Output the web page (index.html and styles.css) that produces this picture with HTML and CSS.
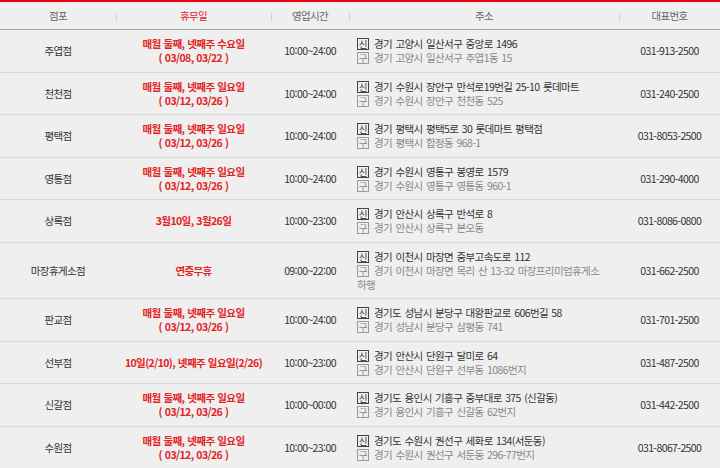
FILE: index.html
```html
<!DOCTYPE html>
<html lang="ko">
<head>
<meta charset="utf-8">
<title>매장 안내</title>
<link rel="stylesheet" href="styles.css">
</head>
<body>
<table class="stores">
  <colgroup>
    <col class="c-name"><col class="c-off"><col class="c-time"><col class="c-addr"><col class="c-tel">
  </colgroup>
  <thead>
    <tr>
      <th>점포</th>
      <th class="sep red">휴무일</th>
      <th class="sep">영업시간</th>
      <th class="sep">주소</th>
      <th class="sep">대표번호</th>
    </tr>
  </thead>
  <tbody>
    <tr>
      <td>주엽점</td>
      <td class="off">매월 둘째, 넷째주 수요일<br>( 03/08, 03/22 )</td>
      <td>10:00~24:00</td>
      <td class="addr"><div class="new"><span class="badge">신</span>경기 고양시 일산서구 중앙로 1496</div><div class="old"><span class="badge">구</span>경기 고양시 일산서구 주엽1동 15</div></td>
      <td>031-913-2500</td>
    </tr>
    <tr>
      <td>천천점</td>
      <td class="off">매월 둘째, 넷째주 일요일<br>( 03/12, 03/26 )</td>
      <td>10:00~24:00</td>
      <td class="addr"><div class="new"><span class="badge">신</span>경기 수원시 장안구 만석로19번길 25-10 롯데마트</div><div class="old"><span class="badge">구</span>경기 수원시 장안구 천천동 525</div></td>
      <td>031-240-2500</td>
    </tr>
    <tr>
      <td>평택점</td>
      <td class="off">매월 둘째, 넷째주 일요일<br>( 03/12, 03/26 )</td>
      <td>10:00~24:00</td>
      <td class="addr"><div class="new"><span class="badge">신</span>경기 평택시 평택5로 30 롯데마트 평택점</div><div class="old"><span class="badge">구</span>경기 평택시 합정동 968-1</div></td>
      <td>031-8053-2500</td>
    </tr>
    <tr>
      <td>영통점</td>
      <td class="off">매월 둘째, 넷째주 일요일<br>( 03/12, 03/26 )</td>
      <td>10:00~24:00</td>
      <td class="addr"><div class="new"><span class="badge">신</span>경기 수원시 영통구 봉영로 1579</div><div class="old"><span class="badge">구</span>경기 수원시 영통구 영통동 960-1</div></td>
      <td>031-290-4000</td>
    </tr>
    <tr>
      <td>상록점</td>
      <td class="off">3월10일, 3월26일</td>
      <td>10:00~23:00</td>
      <td class="addr"><div class="new"><span class="badge">신</span>경기 안산시 상록구 반석로 8</div><div class="old"><span class="badge">구</span>경기 안산시 상록구 본오동</div></td>
      <td>031-8086-0800</td>
    </tr>
    <tr>
      <td>마장휴게소점</td>
      <td class="off">연중무휴</td>
      <td>09:00~22:00</td>
      <td class="addr"><div class="new"><span class="badge">신</span>경기 이천시 마장면 중부고속도로 112</div><div class="old"><span class="badge">구</span>경기 이천시 마장면 목리 산 13-32 마장프리미엄휴게소 하행</div></td>
      <td>031-662-2500</td>
    </tr>
    <tr>
      <td>판교점</td>
      <td class="off">매월 둘째, 넷째주 일요일<br>( 03/12, 03/26 )</td>
      <td>10:00~24:00</td>
      <td class="addr"><div class="new"><span class="badge">신</span>경기도 성남시 분당구 대왕판교로 606번길 58</div><div class="old"><span class="badge">구</span>경기 성남시 분당구 삼평동 741</div></td>
      <td>031-701-2500</td>
    </tr>
    <tr>
      <td>선부점</td>
      <td class="off">10일(2/10), 넷째주 일요일(2/26)</td>
      <td>10:00~23:00</td>
      <td class="addr"><div class="new"><span class="badge">신</span>경기 안산시 단원구 달미로 64</div><div class="old"><span class="badge">구</span>경기 안산시 단원구 선부동 1086번지</div></td>
      <td>031-487-2500</td>
    </tr>
    <tr>
      <td>신갈점</td>
      <td class="off">매월 둘째, 넷째주 일요일<br>( 03/12, 03/26 )</td>
      <td>10:00~00:00</td>
      <td class="addr"><div class="new"><span class="badge">신</span>경기도 용인시 기흥구 중부대로 375 (신갈동)</div><div class="old"><span class="badge">구</span>경기 용인시 기흥구 신갈동 62번지</div></td>
      <td>031-442-2500</td>
    </tr>
    <tr>
      <td>수원점</td>
      <td class="off">매월 둘째, 넷째주 일요일<br>( 03/12, 03/26 )</td>
      <td>10:00~23:00</td>
      <td class="addr"><div class="new"><span class="badge">신</span>경기도 수원시 권선구 세화로 134(서둔동)</div><div class="old"><span class="badge">구</span>경기 수원시 권선구 서둔동 296-77번지</div></td>
      <td>031-8067-2500</td>
    </tr>
  </tbody>
</table>
</body>
</html>
```

FILE: styles.css
```css
html, body {
  margin: 0;
  padding: 0;
  background: #efefef;
}
body {
  font-family: "Noto Sans CJK KR", "Noto Sans", sans-serif;
  font-size: 10.5px;
  letter-spacing: -0.6px;
  word-spacing: 1px;
  color: #333;
}
.stores {
  width: 720px;
  border-collapse: collapse;
  table-layout: fixed;
  border-top: 2px solid #e60012;
}
.c-name { width: 116px; }
.c-off { width: 155px; }
.c-time { width: 78px; }
.c-addr { width: 270px; }
.c-tel { width: 101px; }

.stores th {
  height: 27px;
  padding: 0;
  font-weight: normal;
  color: #666;
  text-align: center;
  border-bottom: 1px solid #a6a6a6;
}
.stores th.sep {
  background: linear-gradient(#cfcfcf, #cfcfcf) no-repeat 0 11px / 1px 8px;
}
.stores th.red { color: #e3231f; }

.stores td {
  padding: 7px 0 6.5px;
  line-height: 14px;
  text-align: center;
  vertical-align: middle;
  border-bottom: 1px solid #d9d9d9;
}
.stores td.off {
  color: #e3231f;
  font-weight: bold;
  word-spacing: 0.5px;
}
.stores td.addr {
  text-align: left;
  padding-left: 8px;
  padding-right: 8px;
  word-break: keep-all;
}
.new, .old {
  line-height: 14px;
}
.badge {
  display: inline-block;
  box-sizing: border-box;
  width: 12px;
  height: 12px;
  line-height: 10px;
  border: 1px solid #444;
  text-align: center;
  font-size: 9.5px;
  letter-spacing: 0;
  margin: 1px 5px 0 0;
  vertical-align: top;
}
.old { color: #888; }
.old .badge { border-color: #9a9a9a; }
```
